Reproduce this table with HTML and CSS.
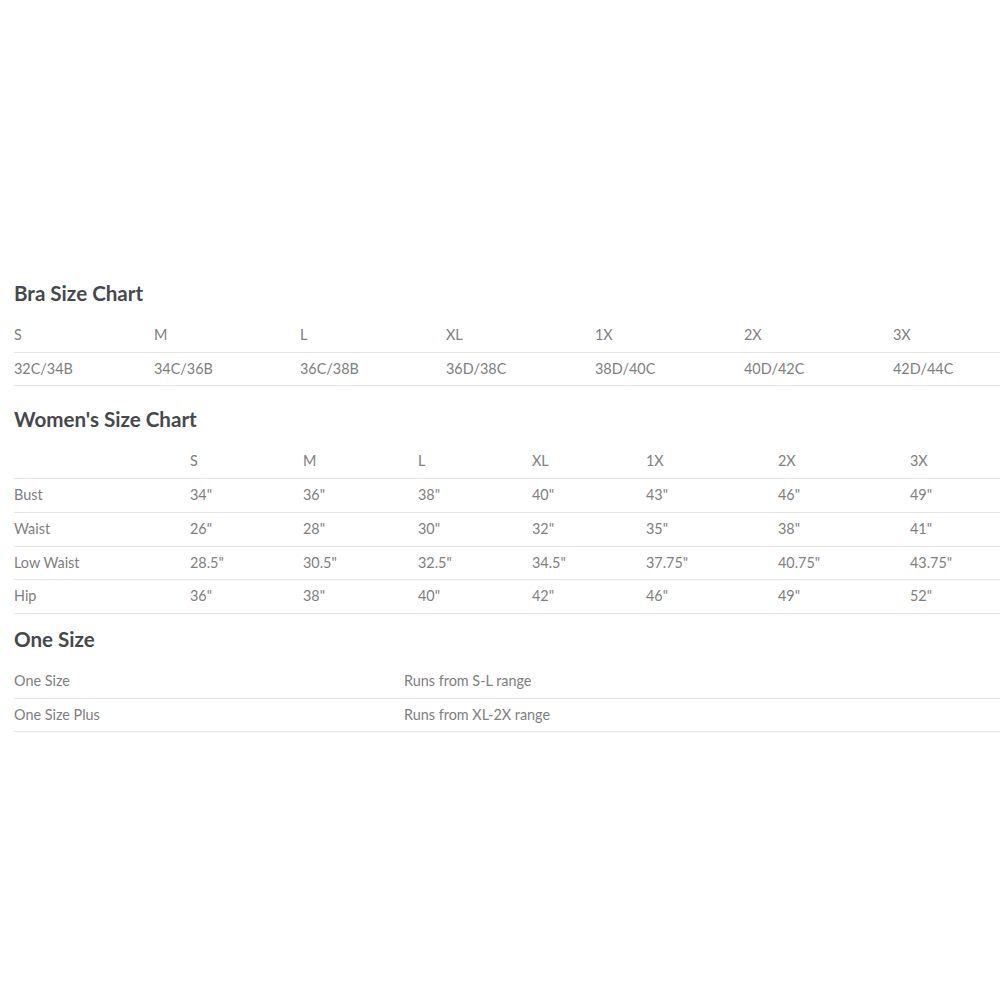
FILE: index.html
```html
<!DOCTYPE html>
<html>
<head>
<meta charset="utf-8">
<link rel="stylesheet" href="styles.css">
</head>
<body>
<main class="page">
  <section class="chart chart-bra">
    <h2 class="chart-title">Bra Size Chart</h2>
    <table class="size-table">
      <colgroup>
        <col class="w140"><col class="w146"><col class="w146"><col class="w149"><col class="w149"><col class="w149"><col>
      </colgroup>
      <tr><td>S</td><td>M</td><td>L</td><td>XL</td><td>1X</td><td>2X</td><td>3X</td></tr>
      <tr><td>32C/34B</td><td>34C/36B</td><td>36C/38B</td><td>36D/38C</td><td>38D/40C</td><td>40D/42C</td><td>42D/44C</td></tr>
    </table>
  </section>

  <section class="chart chart-women">
    <h2 class="chart-title">Women's Size Chart</h2>
    <table class="size-table">
      <colgroup>
        <col class="w176"><col class="w113"><col class="w115"><col class="w114"><col class="w114"><col class="w132"><col class="w132"><col>
      </colgroup>
      <tr><td></td><td>S</td><td>M</td><td>L</td><td>XL</td><td>1X</td><td>2X</td><td>3X</td></tr>
      <tr><td>Bust</td><td>34"</td><td>36"</td><td>38"</td><td>40"</td><td>43"</td><td>46"</td><td>49"</td></tr>
      <tr><td>Waist</td><td>26"</td><td>28"</td><td>30"</td><td>32"</td><td>35"</td><td>38"</td><td>41"</td></tr>
      <tr><td>Low Waist</td><td>28.5"</td><td>30.5"</td><td>32.5"</td><td>34.5"</td><td>37.75"</td><td>40.75"</td><td>43.75"</td></tr>
      <tr><td>Hip</td><td>36"</td><td>38"</td><td>40"</td><td>42"</td><td>46"</td><td>49"</td><td>52"</td></tr>
    </table>
  </section>

  <section class="chart chart-one">
    <h2 class="chart-title">One Size</h2>
    <table class="size-table">
      <colgroup>
        <col class="w390"><col>
      </colgroup>
      <tr><td>One Size</td><td>Runs from S-L range</td></tr>
      <tr><td>One Size Plus</td><td>Runs from XL-2X range</td></tr>
    </table>
  </section>
</main>
</body>
</html>
```

FILE: styles.css
```css
html, body {
  margin: 0;
  padding: 0;
  background: #ffffff;
}

body {
  font-family: Lato, "Open Sans", "Liberation Sans", sans-serif;
  color: #808080;
}

.page {
  padding: 280px 0 0 14px;
}

.chart-title {
  margin: 0 0 13px 0;
  font-size: 20.6px;
  line-height: 26px;
  font-weight: 700;
  color: #45494c;
}

.chart + .chart {
  margin-top: 20px;
}

.chart-one {
  margin-top: 12px !important;
}

.size-table {
  width: 986px;
  border-collapse: collapse;
  table-layout: fixed;
}

.size-table td {
  padding: 8px 0;
  font-size: 14.4px;
  line-height: 16.7px;
  border-bottom: 1px solid #e6e6e6;
  text-align: left;
  vertical-align: middle;
  white-space: nowrap;
}

.w140 { width: 140px; }
.w146 { width: 146px; }
.w149 { width: 149px; }
.w176 { width: 176px; }
.w113 { width: 113px; }
.w115 { width: 115px; }
.w114 { width: 114px; }
.w132 { width: 132px; }
.w390 { width: 390px; }
```
